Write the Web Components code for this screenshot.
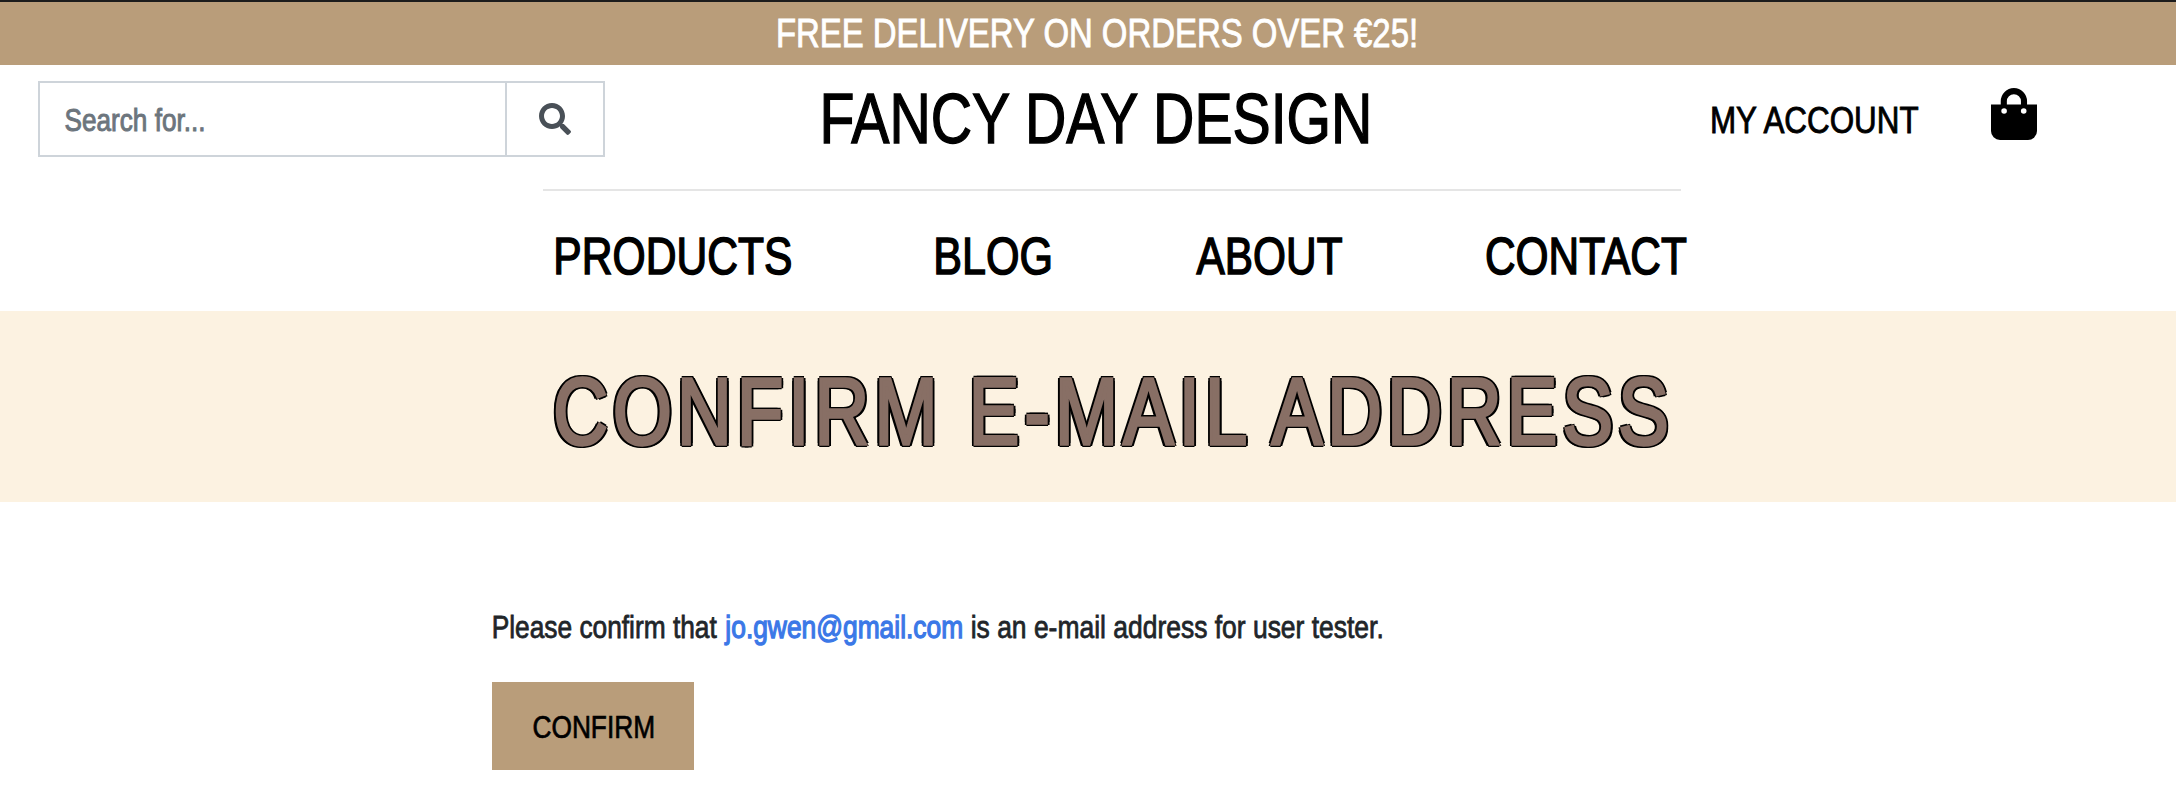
<!DOCTYPE html>
<html lang="en">
<head>
<meta charset="utf-8">
<title>Confirm E-mail Address</title>
<style>
  html, body { margin: 0; background: #fff; }
  body { font-family: "Liberation Sans Narrow", "Liberation Sans", Arial, sans-serif; color: #212529; overflow: hidden; }
</style>
</head>
<body>
<shop-page></shop-page>
<script>
  const define = (name, html, ready) => {
    const template = document.createElement('template');
    template.innerHTML = html;
    customElements.define(name, class extends HTMLElement {
      constructor() {
        super();
        this.attachShadow({ mode: 'open' }).append(template.content.cloneNode(true));
      }
      connectedCallback() { if (ready) ready.call(this); }
    });
  };

  /* A line of condensed type: its ink is set to exactly `width` pixels. */
  define('narrow-text', `
    <style>
      :host { display: block; flex: none; white-space: nowrap; line-height: 1.5; }
      span { display: inline-block; transform-origin: 0 50%; vertical-align: top; }
    </style>
    <span><slot></slot></span>`, function () {
    const width = +this.getAttribute('width');
    const size = +this.getAttribute('size');
    const spacing = +(this.getAttribute('spacing') || 0);
    const stroke = +(this.getAttribute('stroke') || 0);
    this.style.width = width + 'px';
    this.style.fontSize = size + 'px';
    const ctx = document.createElement('canvas').getContext('2d');
    ctx.font = size + 'px "Liberation Sans Narrow", "Liberation Sans", Arial, sans-serif';
    const text = this.textContent.trim();
    const m = ctx.measureText(text);
    const left = -m.actualBoundingBoxLeft - stroke / 2;
    const right = m.actualBoundingBoxRight + spacing * (text.length - 1) + stroke / 2;
    const scale = width / (right - left);
    const span = this.shadowRoot.querySelector('span');
    span.style.letterSpacing = spacing + 'px';
    span.style.webkitTextStroke = stroke + 'px currentColor';
    span.style.transform = `translateX(${-left * scale}px) scaleX(${scale})`;
  });

  define('promo-bar', `
    <style>
      :host { display: flex; box-sizing: border-box; height: 65px; padding: 0 0 0 777.6px; align-items: center;
        background: #b99d7a; color: #fff; border-top: 2px solid #1c1c1c; }
    </style>
    <slot></slot>`);

  define('search-box', `
    <style>
      :host { display: flex; box-sizing: border-box; width: 567px; height: 76px; border: 2px solid #ced4da; color: #6c757d; }
      .field { flex: 1; display: flex; align-items: center; padding: 1px 0 0 24.5px; border-right: 2px solid #ced4da; }
      .go { width: 96px; display: flex; align-items: center; justify-content: center; color: #495057; }
      svg { width: 32px; height: 32px; }
    </style>
    <div class="field"><slot></slot></div>
    <div class="go"><svg viewBox="0 0 512 512" fill="currentColor"><path d="M505 442.7L405.3 343c-4.5-4.5-10.6-7-17-7H372c27.6-35.3 44-79.7 44-128C416 93.1 322.9 0 208 0S0 93.1 0 208s93.1 208 208 208c48.3 0 92.7-16.4 128-44v16.3c0 6.4 2.5 12.5 7 17l99.7 99.7c9.4 9.4 24.6 9.4 33.9 0l28.3-28.3c9.4-9.4 9.4-24.6.1-34zM208 336c-70.7 0-128-57.2-128-128 0-70.7 57.2-128 128-128 70.7 0 128 57.2 128 128 0 70.7-57.2 128-128 128z"/></svg></div>`);

  define('bag-icon', `
    <style>
      :host { display: block; width: 46px; height: 52px; }
      svg { display: block; }
    </style>
    <svg width="46" height="52" viewBox="0 0 46 52">
      <path d="M0 16.4H46V43a9 9 0 0 1-9 9H9a9 9 0 0 1-9-9Z" fill="#000"/>
      <path d="M12.8 19V13.2a10.1 10.1 0 0 1 20.2 0V19" fill="none" stroke="#000" stroke-width="6.1"/>
      <circle cx="13.1" cy="23" r="2.8" fill="#fff"/><circle cx="32.7" cy="23" r="2.8" fill="#fff"/>
    </svg>`);

  define('shop-header', `
    <style>
      :host { display: flex; align-items: center; height: 76px; padding: 16px 139px 32px 38px; color: #000; }
      .brand { margin-left: 218px; }
      .account { margin-left: 341.3px; padding-top: 2px; }
      bag-icon { margin: 0 0 11px 69.6px; }
    </style>
    <search-box><narrow-text width="138.5" size="32" stroke="1">Search for...</narrow-text></search-box>
    <narrow-text class="brand" width="548" size="70.4" stroke="1.4">FANCY DAY DESIGN</narrow-text>
    <narrow-text class="account" width="209.2" size="37.8" stroke="0.9">MY ACCOUNT</narrow-text>
    <bag-icon></bag-icon>`);

  define('main-nav', `
    <style>
      :host { display: block; color: #000; }
      hr { margin: 0 495px 0 543px; border: 0; height: 2px; background: #e5e5e5; }
      nav { display: flex; box-sizing: border-box; height: 120px; align-items: center; gap: 144.2px; padding: 11px 0 0 556.4px; }
    </style>
    <hr>
    <nav>
      <narrow-text width="235.8" size="51.8" stroke="1.5">PRODUCTS</narrow-text>
      <narrow-text width="115" size="51.8" stroke="1.5">BLOG</narrow-text>
      <narrow-text width="146.6" size="51.8" stroke="1.5">ABOUT</narrow-text>
      <narrow-text width="200.9" size="51.8" stroke="1.5">CONTACT</narrow-text>
    </nav>`);

  define('page-hero', `
    <style>
      :host { display: flex; box-sizing: border-box; height: 191px; align-items: center; padding: 9px 0 0 554.6px;
        background: #fcf2e1; color: #886f65;
        /* outline drawn outside the stroked letters */
        text-shadow: -3.9px -1.5px #000, -3.9px 1.5px #000, 3.9px -1.5px #000, 3.9px 1.5px #000,
          -2px -3.3px #000, 2px -3.3px #000, -2px 3.3px #000, 2px 3.3px #000; }
    </style>
    <slot></slot>`);

  define('confirm-button', `
    <style>
      :host { display: flex; box-sizing: border-box; width: 202px; height: 88px; align-items: center; padding: 2px 0 0 40.7px; background: #b99d7a; color: #000; }
    </style>
    <slot></slot>`);

  define('confirm-panel', `
    <style>
      :host { display: block; padding: 100.6px 0 0 492px; }
      p { display: flex; margin: 0 0 31.4px; height: 48px; }
      .lead { margin-left: 1px; }
      .mail { color: #3b78e7; margin-left: 6.5px; }
      .rest { margin-left: 10.2px; }
    </style>
    <p>
      <narrow-text class="lead" width="224.2" size="32" stroke="0.8">Please confirm that</narrow-text>
      <narrow-text class="mail" width="238.3" size="32" stroke="1.3">jo.gwen@gmail.com</narrow-text>
      <narrow-text class="rest" width="409.7" size="32" stroke="0.8">is an e-mail address for user tester.</narrow-text>
    </p>
    <confirm-button><narrow-text width="121" size="32" stroke="0.7">CONFIRM</narrow-text></confirm-button>`);

  define('shop-page', `
    <style>:host { display: block; height: 809px; }</style>
    <promo-bar><narrow-text width="638.4" size="40.4" stroke="0.9">FREE DELIVERY ON ORDERS OVER €25!</narrow-text></promo-bar>
    <shop-header></shop-header>
    <main-nav></main-nav>
    <page-hero><narrow-text width="1119" size="94" stroke="3.4" spacing="6.5">CONFIRM E-MAIL ADDRESS</narrow-text></page-hero>
    <confirm-panel></confirm-panel>`);
</script>
</body>
</html>
